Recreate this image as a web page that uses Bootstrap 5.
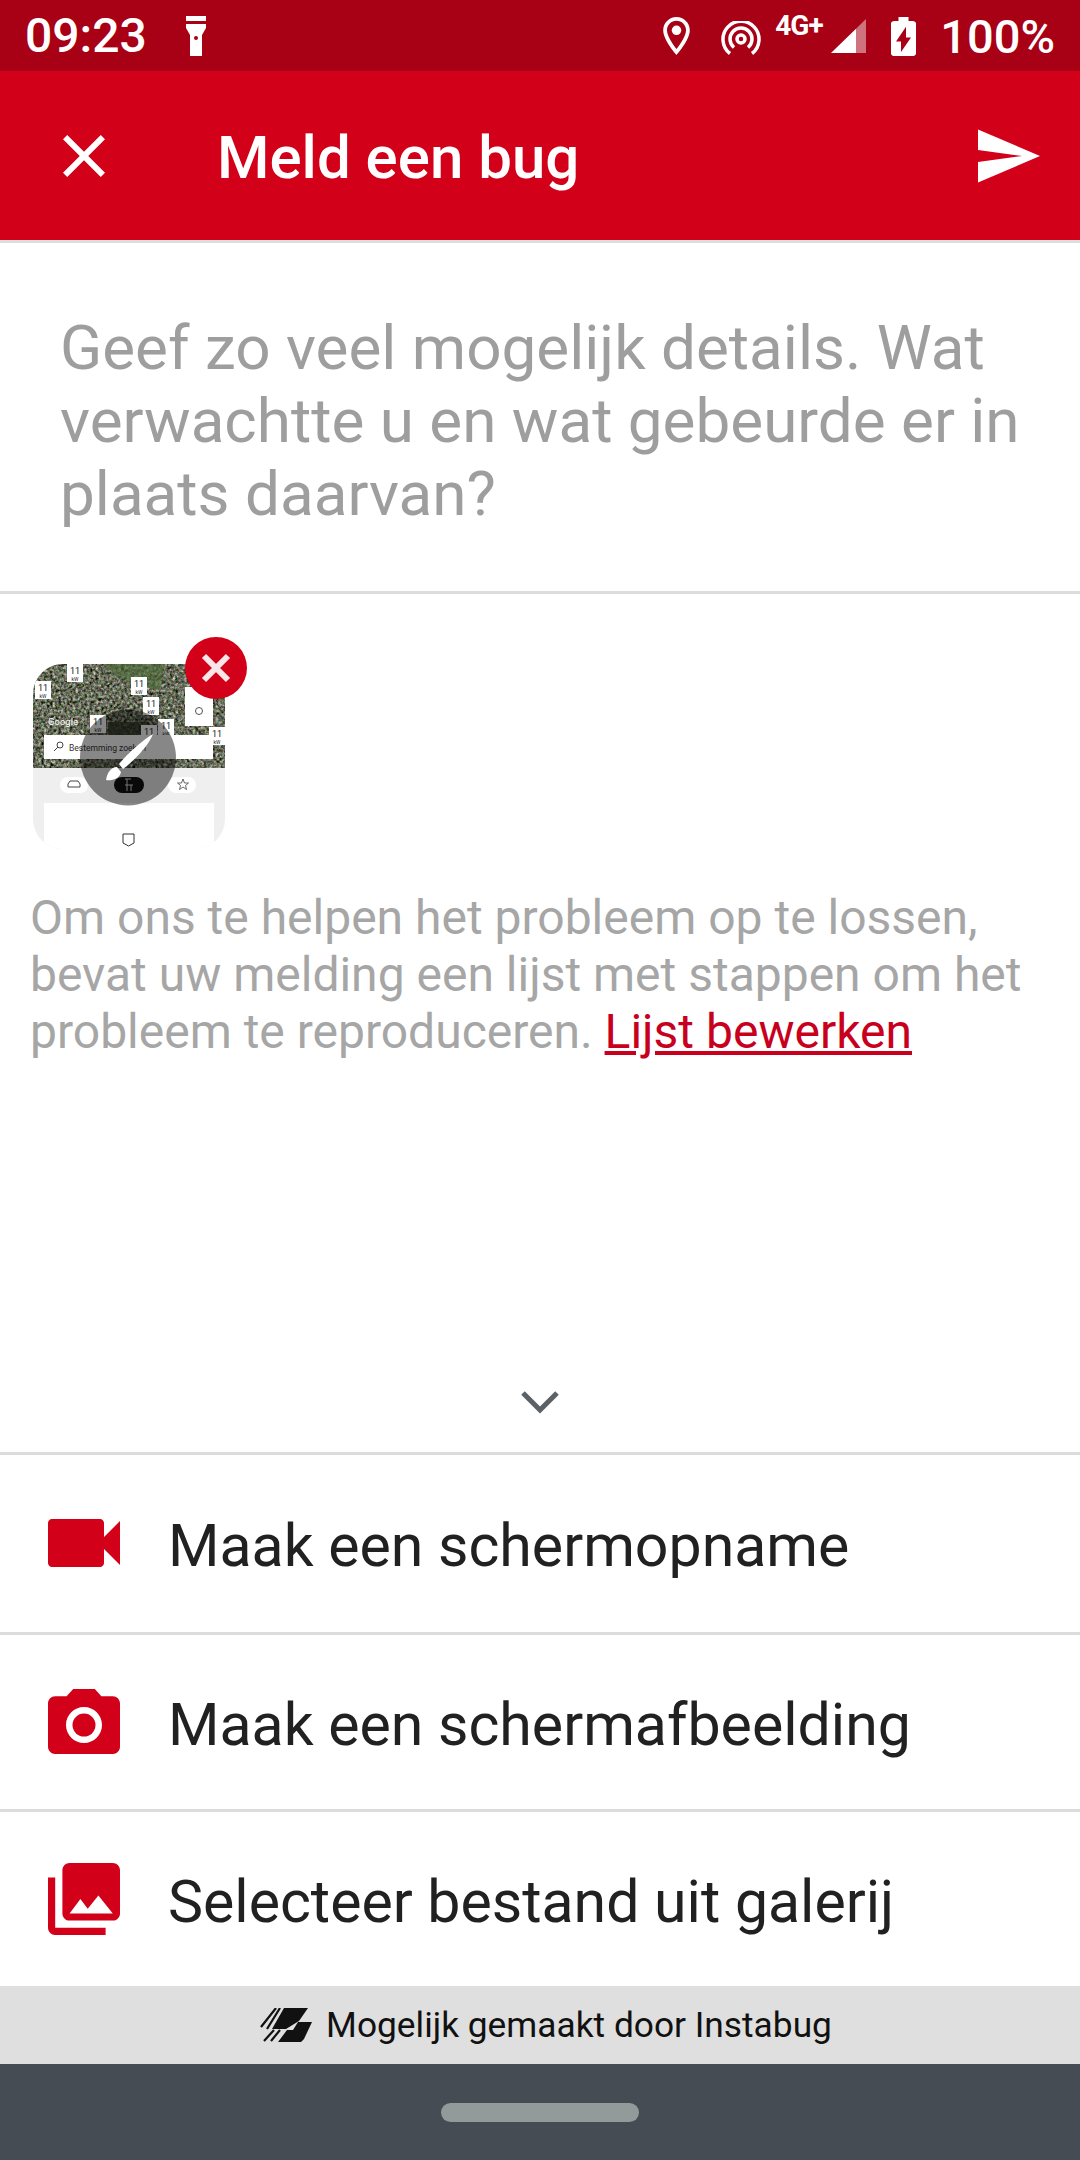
<!DOCTYPE html>
<html lang="nl">
<head>
  <meta charset="UTF-8" />
  <meta name="viewport" content="width=device-width, initial-scale=1" />
  <title>Meld een bug</title>
  <link href="https://cdn.jsdelivr.net/npm/bootstrap@5.3.0/dist/css/bootstrap.min.css" rel="stylesheet" />
  <style>
    body { font-family: Roboto, "Liberation Sans", sans-serif; background: #fff; }
    .phone { width: 1080px; height: 2160px; overflow: hidden; }

    .status-bar { height: 71px; background: #a80015; color: #fff; padding: 1px 25px 0; font-size: 48px; font-weight: 500; line-height: 1; }
    .status-time { width: 161px; }
    .status-pct { font-size: 47px; }
    .net-type { font-size: 28px; font-weight: 700; line-height: 1; width: 56px; margin-top: -20px; letter-spacing: -1px; }
    .ic-place { margin-right: 31px; }
    .ic-hotspot { margin-right: 14px; margin-top: 3px; }
    .ic-signal { margin-right: 25px; }
    .ic-battery { margin-right: 24px; }

    .app-bar { height: 169px; background: #d30019; color: #fff; padding: 0 40px 0 63px; }
    .app-title { font-size: 60px; font-weight: 500; margin: 4px 0 0 112px; line-height: 1; }

    .hint-box { height: 354px; border-top: 3px solid #ddd; border-bottom: 3px solid #dcdcdc; padding: 68px 30px 0 60px; font-size: 62px; line-height: 73px; color: #9e9e9e; }
    .attach-box { padding: 70px 0 0 33px; }
    .thumb { width: 192px; height: 185px; }
    .thumb svg { display: block; }
    .thumb-remove { position: absolute; left: 152px; top: -27px; width: 62px; height: 62px; border-radius: 50%; background: #d30019; }
    .steps-text { margin: 40px 0 0 -3px; font-size: 48px; line-height: 57px; color: #a6a6a6; white-space: nowrap; }
    .steps-text a { color: #c8001e; }
    .chevron-row { height: 74px; padding-top: 12px; }

    .action-row { height: 180px; padding: 0 0 0 48px; border-top: 3px solid #dcdcdc; font-size: 59px; color: #212121; gap: 48px; }
    .action-row svg { flex: none; margin-top: -1px; }
    .action-row span { padding-top: 6px; }
    .action-row:nth-child(2) { height: 177px; }
    .action-list .action-row:last-child { height: 177px; }

    .powered { height: 78px; background: #dfdfdf; color: #111; font-size: 35.300px; gap: 14px; padding-left: 12px; }
    .nav-bar { height: 96px; background: #464c54; padding-top: 39px; }
    .nav-pill { width: 198px; height: 19px; border-radius: 10px; background: #939a9a; }
  </style>
</head>
<body>
<div class="phone d-flex flex-column">

  <div class="status-bar d-flex align-items-center justify-content-between">
    <div class="d-flex align-items-center">
      <span class="status-time">09:23</span>
      <svg width="20" height="40" viewBox="0 0 20 40" fill="#fff"><path d="M0 0h20v5H0zM0 8h20v4l-4 7v21H4V19L0 12z"/><circle cx="10" cy="22" r="2" fill="#a80015"/></svg>
    </div>
    <div class="d-flex align-items-center">
      <svg class="ic-place" width="27" height="38" viewBox="5 2 14 20" fill="#fff"><path d="M12 2C8.130 2 5 5.130 5 9c0 5.250 7 13 7 13s7-7.750 7-13c0-3.870-3.130-7-7-7zM7 9c0-2.760 2.240-5 5-5s5 2.240 5 5c0 2.880-2.880 7.190-5 9.880C9.920 16.210 7 11.850 7 9z"/><circle cx="12" cy="9" r="2.500"/></svg>
      <svg class="ic-hotspot" width="40" height="34" viewBox="0 0 40 34" fill="none" stroke="#fff" stroke-width="3.500"><path d="M9 32.500A18 18 0 1 1 31 32.500"/><path d="M13 26.500A11 11 0 1 1 27 26.500"/><circle cx="20" cy="18" r="4"/></svg>
      <span class="net-type">4G+</span>
      <svg class="ic-signal" width="35" height="34" viewBox="0 0 35 34"><path d="M35 0v34H25V9.700z" fill="#fff" opacity=".45"/><path d="M25 9.700V34H0z" fill="#fff"/></svg>
      <svg class="ic-battery" width="25" height="39" viewBox="7 2 10 20" preserveAspectRatio="none" fill="#fff"><path d="M15.670 4H14V2h-4v2H8.330C7.600 4 7 4.600 7 5.330v15.330C7 21.400 7.600 22 8.330 22h7.330c.74 0 1.340-.6 1.340-1.330V5.330C17 4.600 16.400 4 15.670 4zM11 20v-5.500H9L13 7v5.500h2L11 20z"/></svg>
      <span class="status-pct">100%</span>
    </div>
  </div>

  <div class="app-bar d-flex align-items-center">
    <svg width="42" height="42" viewBox="5 5 14 14" fill="#fff"><path d="M19 6.410L17.590 5 12 10.590 6.410 5 5 6.410 10.590 12 5 17.590 6.410 19 12 13.410 17.590 19 19 17.590 13.410 12z"/></svg>
    <h1 class="app-title flex-grow-1">Meld een bug</h1>
    <svg width="62" height="54" viewBox="2 3 21 18" fill="#fff"><path d="M2.010 21L23 12 2.010 3 2 10l15 2-15 2z"/></svg>
  </div>

  <div class="hint-box">Geef zo veel mogelijk details. Wat<br>verwachtte u en wat gebeurde er in<br>plaats daarvan?</div>

  <div class="attach-box flex-grow-1">
    <div class="thumb position-relative">
      <svg width="192" height="185" viewBox="0 0 192 185">
        <defs>
          <clipPath id="thumbClip"><path d="M30 0h132a30 30 0 0 1 30 30v125a30 30 0 0 1-30 30H30a30 30 0 0 1-30-30V30A30 30 0 0 1 30 0z"/></clipPath>
          <filter id="sat" x="0" y="0" width="100%" height="100%" color-interpolation-filters="sRGB">
            <feTurbulence type="fractalNoise" baseFrequency=".35" numOctaves="3" seed="8"/>
            <feColorMatrix type="matrix" values=".8 .5 .5 0 -.5  .5 .8 .5 0 -.48  .5 .5 .8 0 -.55  0 0 0 0 1"/>
          </filter>
          <g id="pin">
            <rect x="-8" y="-9" width="16" height="18" fill="#fff"/>
            <text y="1" text-anchor="middle" font-size="9" font-family="Roboto, sans-serif" fill="#222">11</text>
            <text y="7.500" text-anchor="middle" font-size="5" font-family="Roboto, sans-serif" fill="#222">kW</text>
          </g>
        </defs>
        <g clip-path="url(#thumbClip)">
          <rect width="192" height="185" fill="#efefef"/>
          <rect width="192" height="104" filter="url(#sat)"/>
          <path d="M70 0h62l-6 26-22-4-20-10z" fill="#4f6b3a" opacity=".65"/>
          <path d="M75 58h40v14H75z" fill="#2f3524" opacity=".7"/>
          <use href="#pin" x="42" y="9"/><use href="#pin" x="10" y="26"/><use href="#pin" x="106" y="22"/>
          <use href="#pin" x="118" y="42"/><use href="#pin" x="65" y="60"/><use href="#pin" x="116" y="70"/>
          <use href="#pin" x="133" y="64"/><use href="#pin" x="184" y="72"/>
          <rect x="152" y="23" width="28" height="39" fill="#fff"/>
          <circle cx="166" cy="47" r="3.500" fill="none" stroke="#555"/>
          <text x="15" y="61" font-size="9.500" font-family="Roboto, sans-serif" fill="#fff">Google</text>
          <rect x="11" y="71" width="169" height="24" fill="#fff"/>
          <circle cx="27" cy="81" r="3" fill="none" stroke="#444"/><path d="M25 83l-4 4" stroke="#444"/>
          <text x="36" y="87" font-size="8.500" font-family="Roboto, sans-serif" fill="#333">Bestemming zoeken</text>
          <rect x="27" y="113" width="28" height="16" rx="8" fill="#fff"/>
          <rect x="135" y="113" width="28" height="16" rx="8" fill="#fff"/>
          <rect x="81" y="113" width="30" height="16" rx="8" fill="#111"/>
          <path d="M35 123v-3l2-3h8l2 3v3z" fill="none" stroke="#444"/>
          <path d="M150 115l1.500 4h4l-3 2.500 1 4-3.500-2.500-3.500 2.500 1-4-3-2.500h4z" fill="none" stroke="#444" stroke-width=".8"/>
          <path d="M92 115h6M92 121h8M94 115v12M98 121v6" stroke="#ddd" stroke-width="1" fill="none"/>
          <rect x="11" y="139" width="170" height="46" fill="#fff"/>
          <path d="M90 170h11v9l-5.500 3-5.500-3z" fill="none" stroke="#333"/>
          <circle cx="95" cy="93.500" r="48" fill="#000" fill-opacity=".47"/>
          <path d="M120 70c-10 6-24 18-34 30l4 5c12-9 26-24 30-35z" fill="#fff"/>
          <path d="M84 103c-6 0-10 6-11 13 5 1 14-1 15-8z" fill="#fff"/>
        </g>
      </svg>
      <span class="thumb-remove d-flex align-items-center justify-content-center">
        <svg width="32" height="32" viewBox="0 0 32 32" stroke="#f8e6e8" stroke-width="6"><path d="M4 4l24 24M28 4L4 28"/></svg>
      </span>
    </div>
    <p class="steps-text">Om ons te helpen het probleem op te lossen,<br>bevat uw melding een lijst met stappen om het<br>probleem te reproduceren. <a href="#">Lijst bewerken</a></p>
  </div>

  <div class="chevron-row d-flex justify-content-center">
    <svg width="38" height="24" viewBox="0 0 38 24" fill="none" stroke="#5b6165" stroke-width="5"><path d="M2 3l17 17L36 3"/></svg>
  </div>

  <div class="action-list list-group list-group-flush">
    <div class="action-row d-flex align-items-center">
      <svg width="72" height="48" viewBox="3 6 18 12" fill="#d30019"><path d="M17 10.500V7c0-.55-.45-1-1-1H4c-.55 0-1 .45-1 1v10c0 .55.45 1 1 1h12c.55 0 1-.45 1-1v-3.500l4 4v-11l-4 4z"/></svg>
      <span>Maak een schermopname</span>
    </div>
    <div class="action-row d-flex align-items-center">
      <svg width="72" height="65" viewBox="2 2 20 18" fill="#d30019"><circle cx="12" cy="12" r="3.200"/><path d="M9 2L7.170 4H4c-1.100 0-2 .9-2 2v12c0 1.100.9 2 2 2h16c1.100 0 2-.9 2-2V6c0-1.100-.9-2-2-2h-3.170L15 2H9zm3 15c-2.760 0-5-2.240-5-5s2.240-5 5-5 5 2.240 5 5-2.240 5-5 5z"/></svg>
      <span>Maak een schermafbeelding</span>
    </div>
    <div class="action-row d-flex align-items-center">
      <svg width="72" height="72" viewBox="2 2 20 20" fill="#d30019"><path d="M22 16V4c0-1.100-.9-2-2-2H8c-1.100 0-2 .9-2 2v12c0 1.100.9 2 2 2h12c1.100 0 2-.9 2-2zm-11-4l2.030 2.710L16 11l4 5H8l3-4zM2 6v14c0 1.100.9 2 2 2h14v-2H4V6H2z"/></svg>
      <span>Selecteer bestand uit galerij</span>
    </div>
  </div>

  <div class="powered d-flex align-items-center justify-content-center">
    <svg width="52" height="34" viewBox="0 0 52 34" fill="#111"><path d="M24 0h24l-9 13-13 8H12zM38 14h14l-8 17-3 3H18l9-12h6z"/><path d="M1 19L16 0M7 21L20 0M4 33l10-11M11 33l9-11" stroke="#111" stroke-width="2.200" fill="none"/></svg>
    <span>Mogelijk gemaakt door Instabug</span>
  </div>

  <div class="nav-bar d-flex justify-content-center">
    <div class="nav-pill"></div>
  </div>
</div>
<script src="https://cdn.jsdelivr.net/npm/bootstrap@5.3.0/dist/js/bootstrap.bundle.min.js"></script>
</body>
</html>
